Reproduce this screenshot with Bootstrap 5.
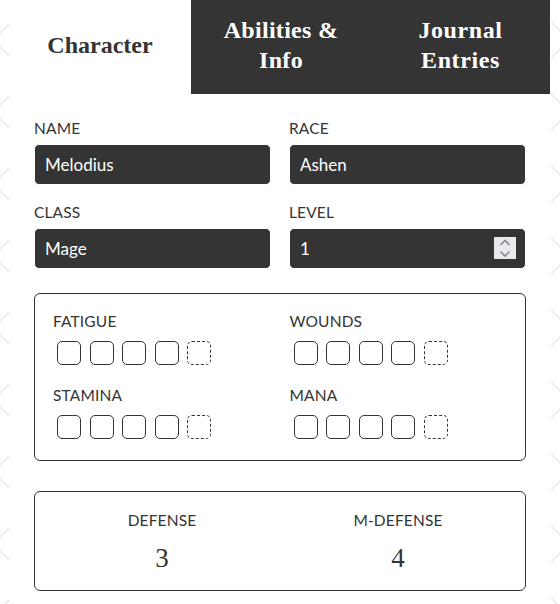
<!DOCTYPE html>
<html lang="en">
<head>
<meta charset="utf-8">
<link href="https://cdn.jsdelivr.net/npm/bootstrap@5.3.0/dist/css/bootstrap.min.css" rel="stylesheet">
<style>
html, body { height: 100%; }
body {
  background-color: #fff;
  background-image: url("data:image/svg+xml,%3Csvg xmlns='http://www.w3.org/2000/svg' width='560' height='72'%3E%3Cpath d='M9 24L0 33M0 47L9 56M551 22L560 31M560 49L551 58' fill='none' stroke='%23d8d8d8' stroke-width='1'/%3E%3C/svg%3E");
  background-repeat: repeat-y;
  background-size: 560px 72px;
  color: #343434;
  font-family: "Lato", "Open Sans", sans-serif;
  overflow: hidden;
}
.sheet { margin: 0 10px 0 9px; background: #fff; min-height: 100vh; }
.tab-strip { height: 94px; }
.tab-cell { font-family: "Liberation Serif", serif; font-weight: 700; font-size: 24px; line-height: 30px; text-align: center; padding: 0 22px 4px; }
.tab-cell.cell-a { width: 182px; background: #fff; color: #343434; }
.tab-cell.cell-b { width: 180px; background: #343434; color: #fff; letter-spacing: .3px; }
.tab-cell.cell-c { width: 179px; background: #343434; color: #fff; letter-spacing: .6px; }
.sheet-body { padding: 24px 24px 0 25px; }
.fld-row { display: grid; grid-template-columns: 237px 237px; column-gap: 18px; row-gap: 17px; }
.fld-label { font-size: 15.5px; letter-spacing: .15px; line-height: 20px; margin-bottom: 6px; display: block; text-transform: uppercase; }
.fld-input.form-control { background: #343434; color: #fff; border: 1px solid #fff; border-radius: 5px; height: 41px; padding: 0 10px; font-size: 17px; box-shadow: none; }
.spin-wrap { position: relative; }
.spin { position: absolute; right: 10px; top: 9px; width: 22px; height: 22px; background: #e9e9ed; display: block; }
.box-panel { border: 1px solid #343434; border-radius: 6px; }
.track-panel { margin-top: 24px; padding: 17px 18px 0; height: 168px; }
.track-grid { display: grid; grid-template-columns: 236.5px 200px; row-gap: 20px; }
.track-label { font-size: 15.5px; letter-spacing: .15px; line-height: 20px; margin-bottom: 10px; text-transform: uppercase; }
.pips { display: flex; gap: 8.5px; padding-left: 4px; }
.pip { width: 24px; height: 24px; border: 1px solid #343434; border-radius: 5px; }
.pip.dashed { border: 1px dashed #343434; }
.stat-panel { margin-top: 30px; height: 100px; display: grid; grid-template-columns: 218px 218px; column-gap: 18px; text-align: center; padding: 18px 18px 0; }
.stat-label { font-size: 15.5px; letter-spacing: .15px; line-height: 20px; text-transform: uppercase; }
.stat-val { font-family: "Liberation Serif", serif; font-size: 27px; line-height: 30px; margin-top: 13px; }
</style>
</head>
<body>
<div class="sheet">
  <div class="d-flex tab-strip">
    <div class="tab-cell cell-a d-flex align-items-center justify-content-center">Character</div>
    <div class="tab-cell cell-b d-flex align-items-center justify-content-center">Abilities &amp; Info</div>
    <div class="tab-cell cell-c d-flex align-items-center justify-content-center">Journal Entries</div>
  </div>
  <div class="sheet-body">
    <div class="fld-row">
      <div><label class="fld-label">Name</label><input class="form-control fld-input" value="Melodius"></div>
      <div><label class="fld-label">Race</label><input class="form-control fld-input" value="Ashen"></div>
      <div><label class="fld-label">Class</label><input class="form-control fld-input" value="Mage"></div>
      <div><label class="fld-label">Level</label>
        <div class="spin-wrap"><input class="form-control fld-input" value="1">
          <svg class="spin" viewBox="0 0 22 22" fill="none" stroke="#8a8a90" stroke-width="1.6"><path d="M6.5 8L11 3.5L15.5 8M6.5 14.5L11 19L15.5 14.5"/></svg>
        </div>
      </div>
    </div>
    <div class="box-panel track-panel">
      <div class="track-grid">
        <div><div class="track-label">Fatigue</div><div class="pips"><span class="pip"></span><span class="pip"></span><span class="pip"></span><span class="pip"></span><span class="pip dashed"></span></div></div>
        <div><div class="track-label">Wounds</div><div class="pips"><span class="pip"></span><span class="pip"></span><span class="pip"></span><span class="pip"></span><span class="pip dashed"></span></div></div>
        <div><div class="track-label">Stamina</div><div class="pips"><span class="pip"></span><span class="pip"></span><span class="pip"></span><span class="pip"></span><span class="pip dashed"></span></div></div>
        <div><div class="track-label">Mana</div><div class="pips"><span class="pip"></span><span class="pip"></span><span class="pip"></span><span class="pip"></span><span class="pip dashed"></span></div></div>
      </div>
    </div>
    <div class="box-panel stat-panel">
      <div><div class="stat-label">Defense</div><div class="stat-val">3</div></div>
      <div><div class="stat-label">M-Defense</div><div class="stat-val">4</div></div>
    </div>
  </div>
</div>
<script src="https://cdn.jsdelivr.net/npm/bootstrap@5.3.0/dist/js/bootstrap.bundle.min.js"></script>
</body>
</html>
